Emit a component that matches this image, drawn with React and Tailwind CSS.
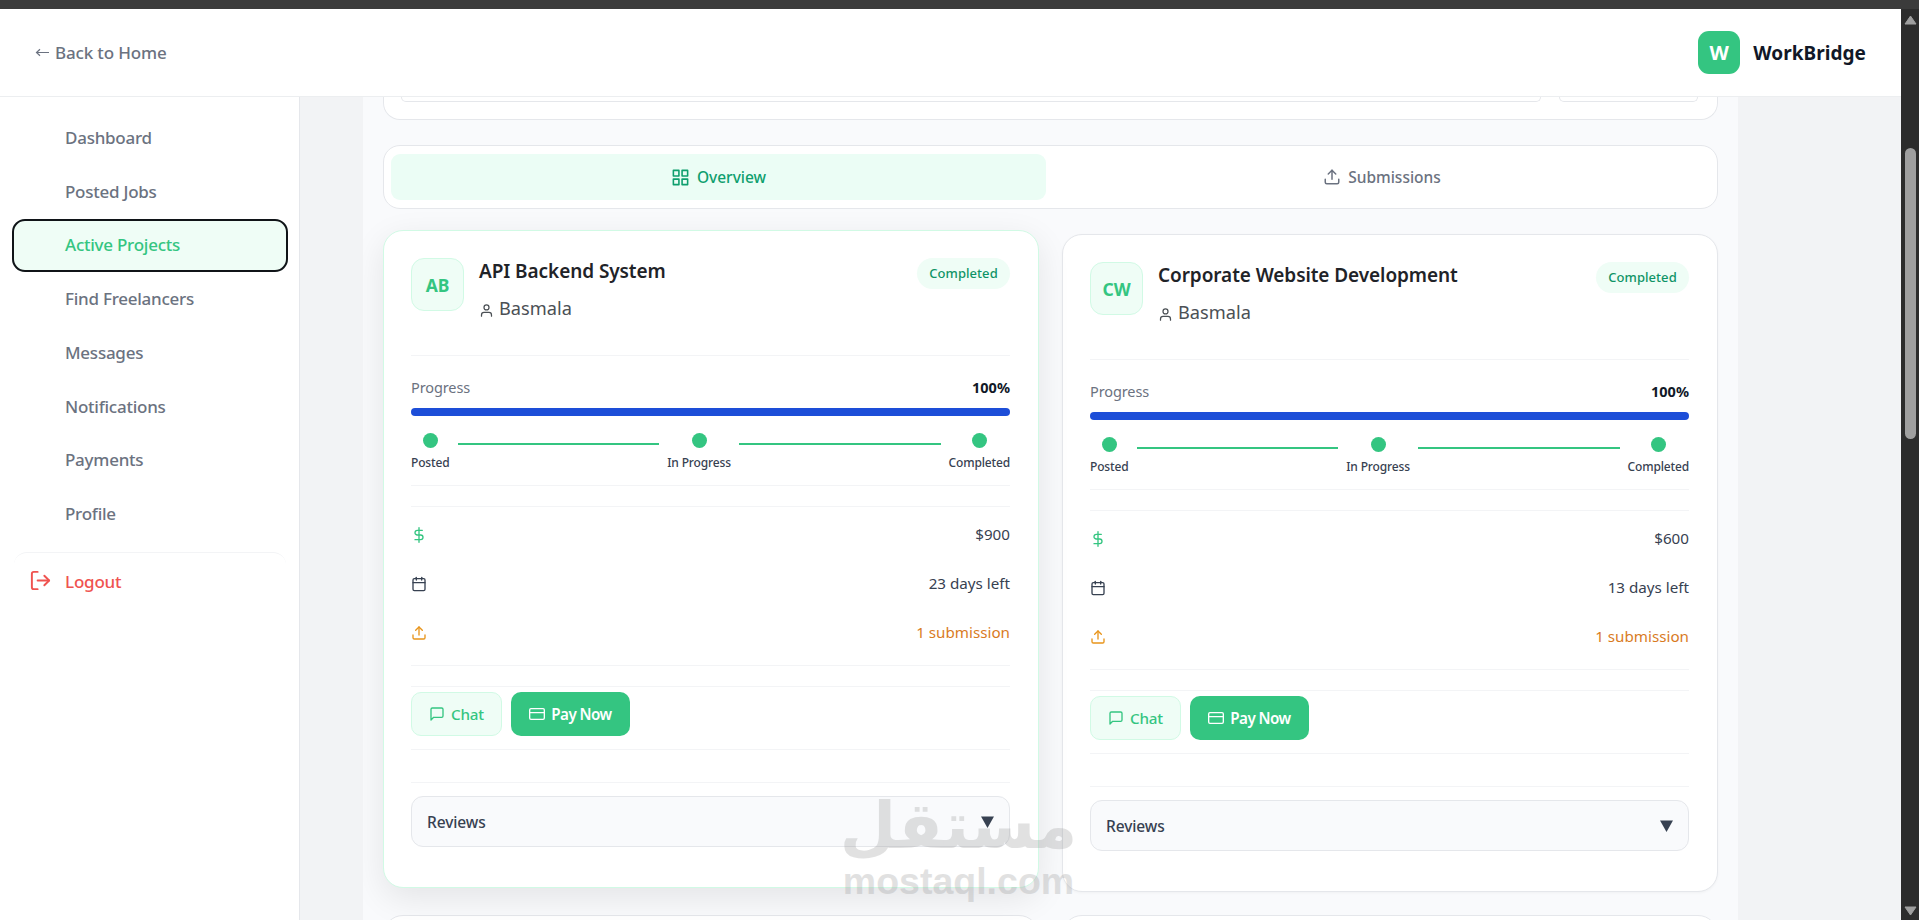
import { FiCalendar, FiCreditCard, FiDollarSign, FiGrid, FiLogOut, FiMessageSquare, FiUpload, FiUser } from "react-icons/fi"
import clsx from "clsx"

const menus = ["Dashboard", "Posted Jobs", "Active Projects", "Find Freelancers", "Messages", "Notifications", "Payments", "Profile"]

const projects = [
    { id: 1, initials: "AB", title: "API Backend System", client: "Basmala", price: "$900", days: "23 days left", submission: "1 submission", raised: true },
    { id: 2, initials: "CW", title: "Corporate Website Development", client: "Basmala", price: "$600", days: "13 days left", submission: "1 submission", raised: false },
]

const Header = () => (
    <header className="flex h-[88px] shrink-0 items-center justify-between border-b border-[#eceef0] bg-white pl-[35px] pr-[35px]">
        <a href="#" className="flex items-center gap-[5px] text-[17px] font-medium tracking-[-0.15px] text-[#6b7280]">
            <svg width="15" height="9" viewBox="0 0 15 9" fill="none" stroke="currentColor" strokeWidth="1.2">
                <path d="M14 4.5H1.5M5 1.2L1.5 4.5L5 7.8" />
            </svg>
            <span>Back to Home</span>
        </a>
        <div className="flex items-center gap-[13px]">
            <div className="flex h-[43px] w-[42px] items-center justify-center rounded-[11px] bg-[#34c581] text-[20px] font-bold text-white">W</div>
            <span className="pt-[2px] text-[19px] font-bold tracking-[0.05px] text-[#111827]">WorkBridge</span>
        </div>
    </header>
)

const Sidebar = () => (
    <aside className="w-[300px] shrink-0 border-r border-[#e5e7eb] bg-white pl-3 pr-[11px] pt-[14px]">
        <nav>
            {menus.map((menu) => (
                <a
                    key={menu}
                    href="#"
                    className={clsx(
                        "mb-[0.75px] flex h-[53px] items-center rounded-[13px] pl-[53px] text-[17px] font-medium tracking-[-0.25px]",
                        menu === "Active Projects" ? "bg-[#effdf6] text-[#34c581] outline-2 -outline-offset-2 outline-[#101418]" : "text-[#6b7280]"
                    )}
                >
                    {menu}
                </a>
            ))}
        </nav>
        <a href="#" className="mx-[2px] mt-[12px] flex h-[58px] items-center gap-[14px] rounded-[13px] border-t border-[#f3f4f6] pl-[15px] text-[17px] font-medium tracking-[-0.2px] text-[#ef5350]">
            <FiLogOut className="mb-[3px] size-[23px]" />
            <span className="-ml-px">Logout</span>
        </a>
    </aside>
)

const Step = ({ label }) => (
    <div className="flex shrink-0 flex-col items-center">
        <span className="size-[15px] rounded-full bg-[#34c581]" />
        <span className="mt-[6px] text-[12px] font-medium leading-[18px] tracking-[-0.15px] text-[#374151]">{label}</span>
    </div>
)

const StepLine = () => <span className="mt-[10px] h-[2px] flex-1 bg-[#34c581]" />

const ProjectCard = ({ project }) => {
    const { initials, title, client, price, days, submission, raised } = project

    return (
        <div
            className={clsx(
                "h-[658px] rounded-[20px] border bg-white pl-[27px] pr-[28px]",
                raised ? "-translate-y-1 border-[#d1fae5] shadow-[0_10px_34px_rgba(0,0,0,0.09)]" : "border-[#e5e7eb] shadow-[0_1px_3px_rgba(0,0,0,0.04)]"
            )}
        >
            {/* Title */}
            <div className="flex h-[124px] items-start pt-[27px]">
                <div className="flex size-[53px] items-center justify-center rounded-[13px] border border-[#d1fae5] bg-[#effdf6] pt-px text-[17.5px] font-bold text-[#34c581]">{initials}</div>
                <div className="ml-[15px] flex-1">
                    <h3 className="text-[19px] font-semibold leading-[26px] tracking-[-0.08px] text-[#1f2328]">{title}</h3>
                    <p className="mt-[10px] flex items-center gap-[5px] text-[18.2px] leading-[28px] text-[#4b5055]">
                        <FiUser className="mt-[5px] size-[15px] text-[#4b5055]" />
                        {client}
                    </p>
                </div>
                <span className="flex h-[31px] w-[93px] items-center justify-center rounded-full bg-[#effdf6] pt-px text-[13px] font-medium tracking-[0.05px] text-[#0f9466]">Completed</span>
            </div>

            {/* Progress */}
            <div className="h-[131px] border-y border-[#f3f4f6] pt-[20px]">
                <div className="flex justify-between text-[14.5px] leading-[22px]">
                    <span className="tracking-[-0.1px] text-[#6b7280]">Progress</span>
                    <span className="font-bold text-[#111827]">100%</span>
                </div>
                <div className="mt-[10px] h-2 rounded-full bg-[#1d4ed8]" />
                <div className="mt-[17px] flex items-start gap-2">
                    <Step label="Posted" />
                    <StepLine />
                    <Step label="In Progress" />
                    <StepLine />
                    <Step label="Completed" />
                </div>
            </div>

            {/* Details */}
            <div className="mt-5 h-[160px] border-y border-[#f3f4f6] pt-[3px] text-[15.2px] text-[#374151]">
                <div className="flex h-[49px] items-center justify-between">
                    <FiDollarSign className="size-4 text-[#34c581]" />
                    <span>{price}</span>
                </div>
                <div className="flex h-[49px] items-center justify-between">
                    <FiCalendar className="size-4" />
                    <span>{days}</span>
                </div>
                <div className="flex h-[49px] items-center justify-between">
                    <FiUpload className="size-4 text-[#e8941a]" />
                    <span className="text-[#d97b1f]">{submission}</span>
                </div>
            </div>

            {/* Buttons */}
            <div className="mt-5 flex h-[64px] gap-[9px] border-y border-[#f3f4f6] pt-[5px] text-[15.2px] font-medium tracking-[-0.2px]">
                <button className="flex h-[44px] w-[91px] items-center justify-center gap-[6px] rounded-[10px] border border-[#d1fae5] bg-[#effdf6] text-[#34c581]">
                    <FiMessageSquare className="size-4" /> Chat
                </button>
                <button className="flex h-[44px] w-[119px] items-center justify-center gap-[6px] rounded-[10px] bg-[#34c581] font-semibold tracking-[-0.55px] text-white">
                    <FiCreditCard className="size-4" /> Pay Now
                </button>
            </div>

            {/* Reviews */}
            <div className="mt-8 border-t border-[#f3f4f6] pt-[13px]">
                <div className="flex h-[51px] items-center justify-between rounded-[12px] border border-[#e5e7eb] bg-[#f9fafc] px-[15px] text-[15.5px] font-medium tracking-[-0.1px] text-[#374151]">
                    <span className="pt-[2px]">Reviews</span>
                    <svg width="13" height="12" viewBox="0 0 13 12" fill="currentColor">
                        <path d="M0 0.5H13L6.5 12Z" />
                    </svg>
                </div>
            </div>
        </div>
    )
}

const Scrollbar = () => (
    <div className="flex w-[18px] shrink-0 flex-col items-center bg-[#2c2c2c] pb-1 pt-[6px]">
        <svg width="13" height="10" viewBox="0 0 13 10" fill="#9f9f9f" stroke="#9f9f9f" strokeLinejoin="round">
            <path d="M6.5 1L12 9H1Z" />
        </svg>
        <div className="mt-[123px] h-[291px] w-[11px] rounded-full bg-[#9f9f9f]" />
        <svg className="mt-auto" width="13" height="10" viewBox="0 0 13 10" fill="#9f9f9f" stroke="#9f9f9f" strokeLinejoin="round">
            <path d="M6.5 9L12 1H1Z" />
        </svg>
    </div>
)

const Watermark = () => (
    <div className="pointer-events-none absolute left-[842px] top-[794px] flex w-[233px] flex-col items-center text-[#8c8c8c] opacity-25">
        <div dir="rtl" className="h-[66px] whitespace-nowrap font-['DejaVu_Sans',sans-serif] text-[65px] font-bold leading-[64px]">مستقل</div>
        <div className="font-['Liberation_Sans',sans-serif] text-[37.5px] font-bold leading-[42px]">mostaql.com</div>
    </div>
)

export default function App() {
    return (
        <div className="relative flex h-[920px] w-[1919px] flex-col overflow-hidden bg-[#f2f3f5] font-['Noto_Sans',sans-serif]">
            <div className="h-[9px] shrink-0 bg-[#3b3b3b]" />
            <div className="flex min-h-0 flex-1">
                <div className="flex w-[1901px] flex-col">
                    <Header />
                    <div className="flex min-h-0 flex-1">
                        <Sidebar />
                        <main className="ml-[63px] w-[1375px] overflow-hidden bg-[#f9fafc] px-[20px]">
                            {/* Filters, scrolled under the header */}
                            <div className="flex h-[23px] gap-[18px] rounded-b-[17px] border border-t-0 border-[#e5e7eb] bg-white pl-[17px] pr-[19px]">
                                <div className="h-[5px] flex-1 rounded-b-[12px] border border-t-0 border-[#e5e7eb]" />
                                <div className="h-[5px] w-[139px] rounded-b-[12px] border border-t-0 border-[#e5e7eb]" />
                            </div>

                            {/* Tabs */}
                            <div className="mt-[25px] flex h-[64px] rounded-[17px] border border-[#e5e7eb] bg-white p-[7px] pt-2 text-[15.5px] font-medium">
                                <button className="flex h-[46px] w-[655px] items-center justify-center gap-[7px] rounded-[9px] bg-[#ebfdf5] text-[#0f9f6e]">
                                    <FiGrid className="size-[19px]" /> <span className="pt-[2px]">Overview</span>
                                </button>
                                <button className="flex h-[46px] flex-1 items-center justify-center gap-[7px] rounded-[9px] pl-[8px] text-[#6b7280]">
                                    <FiUpload className="size-[18px]" /> <span className="pt-[2px]">Submissions</span>
                                </button>
                            </div>

                            {/* Projects */}
                            <div className="mt-[25px] grid grid-cols-2 gap-x-[23px] gap-y-[23px]">
                                {projects.map((project) => (
                                    <ProjectCard key={project.id} project={project} />
                                ))}
                                <div className="h-10 rounded-t-[20px] border border-[#e5e7eb] bg-white" />
                                <div className="h-10 rounded-t-[20px] border border-[#e5e7eb] bg-white" />
                            </div>
                        </main>
                    </div>
                </div>
                <Scrollbar />
            </div>
            <Watermark />
        </div>
    )
}
